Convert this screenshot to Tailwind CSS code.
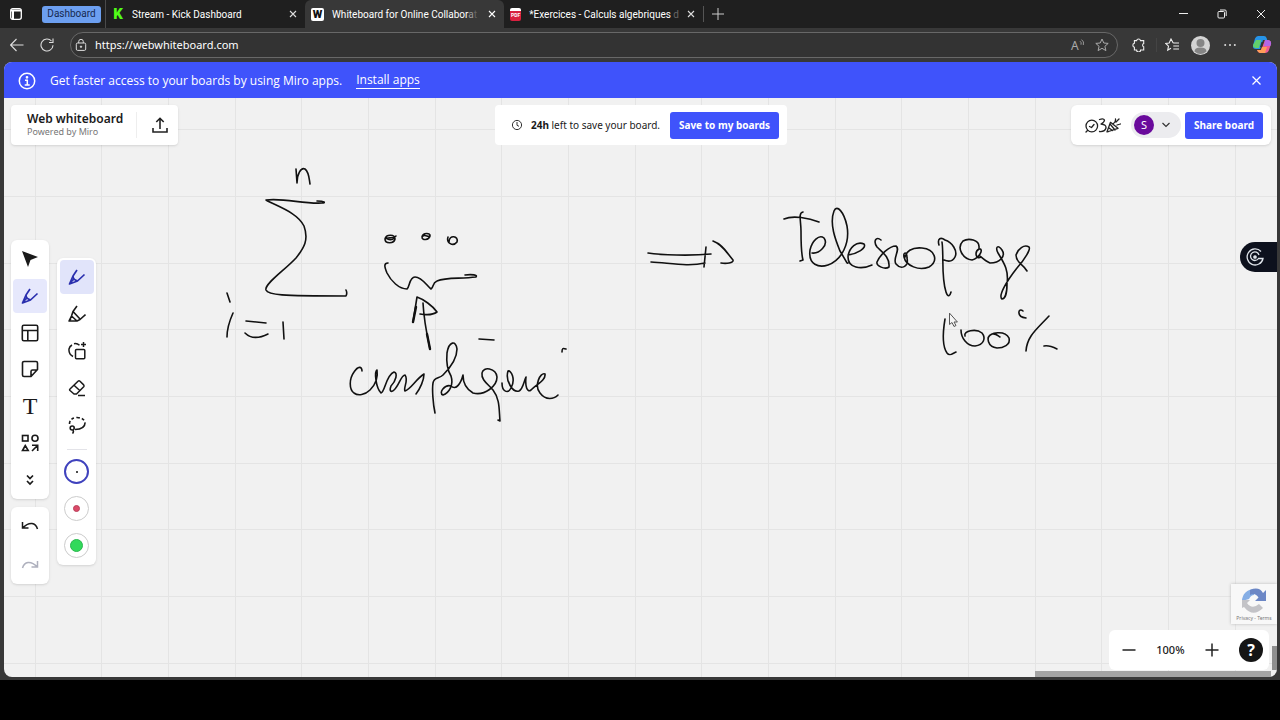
<!DOCTYPE html>
<html lang="en">
<head>
    <meta charset="UTF-8" />
    <meta name="viewport" content="width=device-width, initial-scale=1.0" />
    <title>Whiteboard for Online Collaboration</title>
    <script src="https://cdn.jsdelivr.net/npm/@tailwindcss/browser@4"></script>
</head>
<body class="bg-black min-h-screen flex flex-col font-['Noto_Sans',sans-serif] text-[#1a1a1a]">
<div class="flex-1 mb-10 flex flex-col bg-[#383838]">

    <!-- tab strip -->
    <div class="h-7 flex items-stretch bg-[#1f1f1f] text-white text-[10px] font-['Roboto',sans-serif]">
        <button class="w-8 flex items-center justify-center" aria-label="Tab actions">
            <svg class="size-3" viewBox="0 0 12 12" fill="none" stroke="#fff" stroke-width="1.3"><rect x="0.7" y="0.7" width="10.6" height="10.6" rx="2" /><path d="M1 2.6h10M3 3v8" stroke-width="2" /></svg>
        </button>
        <button class="self-center ml-2.5 mr-1 w-[59px] h-[17px] rounded-[3px] bg-[#6c9ff0] text-[#16294f] text-[10px] leading-4">Dashboard</button>
        <div class="w-[200px] pl-1.5 pr-2 flex items-center gap-2 border-l border-[#4a4a4a]">
            <span class="size-3 text-[#53fc18] font-black text-[15px] leading-3 text-center">K</span>
            <span class="flex-1 whitespace-nowrap">Stream - Kick Dashboard</span>
            <button aria-label="Close tab"><svg class="size-2" viewBox="0 0 8 8" stroke="#ddd" stroke-width="1.1"><path d="M1 1l6 6M7 1L1 7" /></svg></button>
        </div>
        <div class="w-[199px] pl-1.5 pr-2 flex items-center gap-2 bg-[#383838] rounded-t-md">
            <span class="size-[13px] rounded-[2px] bg-white text-[#111] font-black text-[11px] leading-[13px] text-center">W</span>
            <span class="flex-1 whitespace-nowrap">Whiteboard for Online Collabor<span class="text-[#999]">a</span><span class="text-[#666]">t</span></span>
            <button aria-label="Close tab"><svg class="size-2" viewBox="0 0 8 8" stroke="#fff" stroke-width="1.1"><path d="M1 1l6 6M7 1L1 7" /></svg></button>
        </div>
        <div class="w-[199px] pl-1.5 pr-2 flex items-center gap-2">
            <span class="w-3 h-[13px] rounded-[2px] bg-[#d8203f] border-t-3 border-white text-white font-bold text-[5px] leading-[9px] text-center">PDF</span>
            <span class="flex-1 whitespace-nowrap">*Exercices - Calculs algebriques <span class="text-[#666]">d</span></span>
            <button aria-label="Close tab"><svg class="size-2" viewBox="0 0 8 8" stroke="#ddd" stroke-width="1.1"><path d="M1 1l6 6M7 1L1 7" /></svg></button>
        </div>
        <button class="my-1.5 pl-2 border-l border-[#555]" aria-label="New tab"><svg class="size-3" viewBox="0 0 12 12" stroke="#ccc"><path d="M6 0v12M0 6h12" /></svg></button>
        <div class="ml-auto pr-3.5 flex items-center gap-[29px]">
            <button aria-label="Minimize"><svg class="size-2.5" viewBox="0 0 10 10" stroke="#eee"><path d="M1 4.5h9" /></svg></button>
            <button aria-label="Restore"><svg class="size-2.5" viewBox="0 0 10 10" fill="none" stroke="#eee"><rect x="1" y="2.5" width="6.5" height="6.5" rx="1" /><path d="M3 1h5a1.2 1.2 0 0 1 1.2 1.2V7" /></svg></button>
            <button aria-label="Close"><svg class="size-2.5" viewBox="0 0 10 10" stroke="#eee"><path d="M1 1l8 8M9 1L1 9" /></svg></button>
        </div>
    </div>

    <!-- address bar -->
    <div class="h-[34px] flex items-center pl-2.5 pr-2 text-white">
        <button aria-label="Back"><svg class="size-3.5" viewBox="0 0 14 14" fill="none" stroke="#ddd" stroke-width="1.1"><path d="M13.5 7H.8M6.5 1L.6 7l5.9 6" /></svg></button>
        <button class="mx-4" aria-label="Refresh"><svg class="size-3.5" viewBox="0 0 14 14" fill="none" stroke="#ddd" stroke-width="1.1"><path d="M13 7.2A6 6 0 1 1 11.5 3M13 .5v4H9" /></svg></button>
        <div class="flex-1 h-[26px] flex items-center gap-2 pl-1 pr-2 rounded-full border border-[#686868] bg-[#333]">
            <svg class="size-3" viewBox="0 0 12 12" fill="none" stroke="#ddd"><rect x="1.3" y="4" width="9.4" height="7.4" rx="1.3" /><path d="M3.7 4V2.6a2.3 2.3 0 0 1 4.6 0V4" /><circle cx="6" cy="7.7" r=".7" fill="#ddd" /></svg>
            <input class="flex-1 min-w-0 text-[11px] leading-4 outline-none" aria-label="Address" value="https://webwhiteboard.com" />
            <button class="mr-0.5" aria-label="Read aloud"><svg class="w-3.5 h-4 overflow-visible" viewBox="0 0 14 16" fill="none" stroke="#999"><text x="0" y="13" font-size="12" fill="#aaa" stroke="none">A</text><path d="M9 4.200q1.800 1.200 1 3.500M10.500 2.600q3 2 1.800 5.400" /></svg></button>
            <button aria-label="Favorite"><svg class="size-3.5" viewBox="0 0 14 14" fill="none" stroke="#aaa"><path d="M7 1l1.8 4 4.4.4-3.3 2.9 1 4.3L7 10.3l-3.9 2.3 1-4.3L.8 5.4 5.2 5z" /></svg></button>
        </div>
        <div class="ml-3.5 flex items-center gap-3">
            <button class="pr-2.5 border-r border-[#444]" aria-label="Extensions"><svg class="size-3.5" viewBox="0 0 14 14" fill="none" stroke="#eee" stroke-width="1.1"><path d="M4.600 2.600a2 2 0 0 1 3.900 0h3.200v3a1.700 1.700 0 0 0 0 3.200v3.200H8.600a2 2 0 0 1-4 0H2.400V9.200a2 2 0 0 1 0-3.900V2.600z" /></svg></button>
            <button class="-ml-1" aria-label="Favorites list"><svg class="size-3.5" viewBox="0 0 14 14" fill="none" stroke="#eee" stroke-width="1.1"><path d="M8.2 5L6 1 4.2 5 .7 5.5l2.8 2.6-.8 4L6 10.3M8.2 5H14M8.3 8H14M8.3 11H14" /></svg></button>
            <button aria-label="Profile"><svg class="size-[19px]" viewBox="0 0 19 19"><circle cx="9.5" cy="9.5" r="9.5" fill="#d4d4d4" /><circle cx="9.5" cy="7" r="4" fill="#858585" /><path d="M3.5 15.5q0-4 6-4t6 4q-6 5-12 0z" fill="#858585" /></svg></button>
            <button class="ml-0.5" aria-label="Settings"><svg class="size-3" viewBox="0 0 12 12" fill="#ddd"><circle cx="1.2" cy="6" r="1" /><circle cx="6" cy="6" r="1" /><circle cx="10.8" cy="6" r="1" /></svg></button>
            <button class="ml-1" aria-label="Copilot">
                <svg class="size-5" viewBox="0 0 20 20">
                    <path d="M6 1h6q2 0 2.600 2l.6 2H11L8 14H4q-3.500 0-3-3.500L3 3.500Q4 1 6 1z" fill="#2694e8" />
                    <path d="M4 5h5l-2 8H3q-2.500-1-2-3z" fill="#62cf6b" />
                    <path d="M13 5h3q3.500.5 3 4l-2 6q-1 3-4 3H8q-2 0-3-3h4z" fill="#ee5b95" />
                    <path d="M5 15h4l1-3h5l-2 6H8q-2 0-3-3z" fill="#ff9d58" />
                    <path d="M13 5h3q3.500.5 3 4l-.6 2H12z" fill="#b268e6" />
                    <path d="M9.500 7h2l-1.500 5H8z" fill="#333" />
                </svg>
            </button>
        </div>
    </div>

    <!-- page -->
    <div class="flex-1 ml-1 mr-[3px] mb-[3px] flex flex-col rounded-lg overflow-hidden bg-[#f1f1f1]">
        <div class="h-9 pt-px flex items-center pl-3.5 pr-4 bg-[#3f53fb] text-white text-[12px] font-['Open_Sans',sans-serif]">
            <svg class="size-[18px] mr-3.5" viewBox="0 0 18 18" fill="none" stroke="#fff" stroke-width="1.500"><circle cx="9" cy="9" r="7.700" /><path d="M7 8.300h2.300v4.500M6.700 12.900h5" /><circle cx="9" cy="5.300" r=".6" fill="#fff" /></svg>
            <span>Get faster access to your boards by using Miro apps.</span>
            <a href="#" class="ml-3.5 border-b border-white leading-4">Install apps</a>
            <button class="ml-auto" aria-label="Dismiss"><svg class="size-[9px]" viewBox="0 0 9 9" stroke="#fff" stroke-width="1.200"><path d="M.5.5l8 8M8.500.5l-8 8" /></svg></button>
        </div>

        <main class="flex-1 relative">
            <!-- board: grid and pen strokes -->
            <svg class="absolute inset-0 size-full">
                <defs>
                    <pattern id="grid" width="200" height="200" patternUnits="userSpaceOnUse">
                        <path d="M31.500 0v200M97.500 0v200M164.500 0v200M0 31.500h200M0 98.500h200M0 165.500h200" stroke="#e4e4e4" />
                    </pattern>
                </defs>
                <rect width="100%" height="100%" fill="url(#grid)" />
                <g transform="translate(-4 -98)" fill="none" stroke="#111" stroke-width="1.600" stroke-linecap="round" stroke-linejoin="round">
                    <!-- sum sign and its bounds -->
                    <path d="M296 169L297 183C297 174 301 167 305 169C309 172 309 178 310 184" />
                    <path d="M317 201C325 201 326 203 322 203C302 204 286 198 266 200C276 206 297 212 304 226C309 240 304 248 296 258C285 270 264 284 266 290C268 295 280 296 346 296C347 294 347 292 346 290" />
                    <path d="M227 293L230 302M233 313C229 322 227 329 227 337M246 321L266 323M245 333C251 339 260 338 268 334M283 322L284 339" />
                    <!-- three dots, brace and arrow -->
                    <path d="M385 239C386 234 395 234 395 239C394 244 385 244 385 239C388 237 393 239 396 236M386 237C388 241 393 240 394 238M422 237C423 232 431 233 430 236C429 240 422 241 422 237C425 233 428 238 429 236M448 237C446 243 453 247 457 242C459 236 449 234 449 242" />
                    <path d="M388 263C384 263 384 266 387 273C391 281 399 289 407 289C410 287 409 277 415 277C422 277 427 286 431 289C434 287 432 283 437 281C446 277 460 279 476 277C478 275 472 274 465 275" />
                    <path d="M430 349C427 335 424 322 423 303M413 322L417 297C423 299 433 306 437 312C433 315 426 315 420 314" />
                    <path d="M430 349L427 334M413 322L416 307" stroke-width="2.400" />
                    <!-- "complique" -->
                    <path d="M362 371C362 366 358 366 354 372C349 379 349 389 354 393C358 396 365 395 370 390C376 384 378 376 377 370C374 372 376 388 381 393C385 392 386 375 394 372C398 373 396 381 391 386C389 391 391 393 394 390C399 386 401 375 405 375C409 380 403 388 405 391C411 389 416 379 424 374C424 380 420 389 416 394" />
                    <path d="M435 413C433 404 432 389 433 383C434 377 439 379 443 375C451 367 457 358 457 349C456 340 449 341 447 353C446 364 448 371 451 376C454 385 449 393 443 395C438 393 445 384 451 386C456 391 461 383 463 375C463 384 466 389 473 393C485 396 497 386 497 377C496 368 483 366 482 373C481 380 488 384 493 390C500 399 499 410 500 421L498 420" />
                    <path d="M502 383C502 392 508 394 511 388C516 379 511 370 508 371C505 381 513 393 519 391C523 389 524 381 526 377C525 386 527 393 531 390C537 384 546 380 545 374C540 372 534 386 540 393C546 401 554 399 558 395M479 339L494 340M562 352C562 348 563 348 566 349" />
                    <!-- implication -->
                    <path d="M648 253C661 255 690 256 711 254M651 262C670 263 688 267 705 263M706 247L704 267M713 241C722 244 727 253 733 260C734 263 726 264 721 263" />
                    <!-- "Telescopage" -->
                    <path d="M784 219C793 215 809 218 819 222M803 212C798 213 801 221 801 231C801 243 801 253 803 260L800 261" />
                    <path d="M812 253C819 254 829 245 824 238C819 234 812 241 810 250C808 265 819 268 828 265C842 260 850 243 847 226C844 212 837 204 834 211C829 224 836 241 840 251C845 259 847 264 848 263M848 255C857 254 867 248 864 244C857 241 849 247 848 257C848 268 861 270 872 265" />
                    <path d="M881 240C876 236 873 241 877 247C882 252 890 257 889 267C885 270 876 266 877 262C880 255 889 246 896 246C901 249 892 259 896 264C901 270 909 267 907 258C907 251 903 252 904 257C906 266 919 271 929 267C939 261 935 249 922 248C911 247 906 252 905 257" />
                    <path d="M939 245C937 238 941 237 945 240C952 242 958 251 955 257C953 261 949 262 944 260M942 242C944 256 941 277 946 292C948 298 950 296 951 292" />
                    <path d="M979 248C980 239 968 238 963 241C956 248 963 259 972 260C980 258 984 248 979 249C974 252 976 260 981 257C978 254 985 261 990 263C1000 263 1006 256 1002 250C998 244 995 247 998 253C1004 263 1009 270 1007 284C1007 293 1005 299 1002 299C998 296 1006 282 1017 268C1025 259 1031 249 1029 247C1024 244 1018 249 1016 255C1016 263 1023 264 1027 271" />
                    <!-- "100°%" -->
                    <path d="M945 319C943 331 942 346 947 353C950 357 953 353 956 352M961 330C961 338 967 346 975 346C984 345 986 338 982 333C976 328 963 331 965 336M988 338C990 332 1005 330 1009 338C1011 345 1003 348 997 348C988 347 985 337 992 334C996 333 998 336 1000 337" />
                    <path d="M1023 311C1018 307 1016 317 1026 318M1049 316C1037 329 1027 336 1026 351M1044 346C1049 345 1053 347 1057 349" />
                    <path d="M949.500 313.500v11l2.500-2 2 4 2-1-2-3.500h3z" fill="#f5f5f5" stroke="#555" stroke-width="1" />
                </g>
            </svg>

            <!-- top cards -->
            <div class="relative grid grid-cols-[1fr_auto_1fr] items-start pt-[7px] pl-[7px] pr-1.5">
                <div class="justify-self-start h-10 w-[167px] pl-4 flex items-center bg-white rounded shadow-sm">
                    <div class="w-[110px] border-r border-[#eee]">
                        <h1 class="text-[12px] leading-[14px] font-semibold">Web whiteboard</h1>
                        <p class="text-[9px] leading-3 text-[#777]">Powered by Miro</p>
                    </div>
                    <button class="ml-[15px]" aria-label="Export"><svg class="size-4" viewBox="0 0 16 16" fill="none" stroke="#222" stroke-width="1.600"><path d="M8 12V1.500M4.300 5L8 1.300 11.700 5M1 11v4h14v-4" /></svg></button>
                </div>
                <div class="h-10 pl-4 pr-2 flex items-center bg-white rounded text-[10px]">
                    <svg class="size-3 mr-2" viewBox="0 0 12 12" fill="none" stroke="#333"><circle cx="6" cy="6" r="4.600" /><path d="M6 3v3.300l2 1" /></svg>
                    <p><b class="font-bold">24h</b> left to save your board.</p>
                    <button class="ml-2.5 h-[27px] w-[109px] rounded-[3px] bg-[#3f53fb] text-white font-bold text-[10px]">Save to my boards</button>
                </div>
                <div class="justify-self-end h-10 pl-3.5 pr-2 flex items-center bg-white rounded-md shadow-sm">
                    <button aria-label="Activities">
                        <svg class="w-9 h-4" viewBox="0 0 36 16" fill="none" stroke="#222" stroke-width="1.300" stroke-linecap="round" stroke-linejoin="round"><circle cx="6.800" cy="9" r="5.800" /><path d="M4.500 9.500l2 1L9 7.500M2.500 13.500l-1.500 1.500M14.500 2.500q4-1.500 5 .5 0 2-3.500 4 5.500.5 5 4-1 4-6.500 3.500M22 14.800l3.500-9.500 7.500 6-9.500 3.200zM25 7l5 6M28 7q3-2 2.500-5M31 5l3-3M32 8l3.500-1M24 11l3.500 2.500" /></svg>
                    </button>
                    <button class="ml-2.5 mr-1 w-[50px] h-[26px] pl-[3px] flex items-center gap-2 rounded-full bg-[#ececef]" aria-label="Account S">
                        <span class="size-5 rounded-full bg-[#6a0a9c] text-white text-[11px] leading-5">S</span>
                        <svg class="w-2 h-1.5" viewBox="0 0 8 6" fill="none" stroke="#333" stroke-width="1.200"><path d="M.5 1L4 4.500 7.500 1" /></svg>
                    </button>
                    <button class="h-[27px] w-[78px] rounded-[3px] bg-[#3f53fb] text-white font-bold text-[10px]">Share board</button>
                </div>
            </div>

            <!-- left toolbars -->
            <div class="absolute left-[7px] top-[142px] flex items-start gap-2">
                <div class="w-[38px] flex flex-col gap-2">
                    <div class="h-[259px] py-0.5 flex flex-col items-center gap-[3px] bg-white rounded-md shadow-sm">
                        <button class="w-[34px] h-[34px] flex items-center justify-center" aria-label="Select"><svg class="size-[18px]" viewBox="0 0 18 18" fill="#1a1a1a"><path d="M1 1l16 6-7.500 3L7 17z" /></svg></button>
                        <button class="w-[34px] h-[34px] flex items-center justify-center rounded bg-[#e6e8fc]" aria-label="Pen"><svg class="size-[18px]" viewBox="0 0 18 18" fill="none" stroke="#2a2fae" stroke-width="1.700" stroke-linejoin="round"><path d="M9 2L5 8 1.500 16l8-3 7-6.500M5 8q0 4 5 5M2 15l3.500-3.500" /></svg></button>
                        <button class="w-[34px] h-[34px] flex items-center justify-center" aria-label="Templates"><svg class="size-[18px]" viewBox="0 0 18 18" fill="none" stroke="#1a1a1a" stroke-width="1.600"><rect x="1.300" y="1.300" width="15.400" height="15.400" rx="1.500" /><path d="M1 6.500h16M6.800 6.500V17" /></svg></button>
                        <button class="w-[34px] h-[34px] flex items-center justify-center" aria-label="Sticky note"><svg class="size-[18px]" viewBox="0 0 18 18" fill="none" stroke="#1a1a1a" stroke-width="1.600" stroke-linejoin="round"><path d="M3 1.500h12A1.500 1.500 0 0 1 16.500 3v6.500L10 16.500H3A1.500 1.500 0 0 1 1.500 15V3A1.500 1.500 0 0 1 3 1.500zM10 16v-4.500Q10 10 11.500 10H16" /></svg></button>
                        <button class="w-[34px] h-[34px] font-['Liberation_Serif',serif] text-[24px] leading-[34px]" aria-label="Text">T</button>
                        <button class="w-[34px] h-[34px] flex items-center justify-center" aria-label="Shapes"><svg class="size-[18px]" viewBox="0 0 18 18" fill="none" stroke="#1a1a1a" stroke-width="1.600"><rect x="1.500" y="1.500" width="5.500" height="5.500" /><circle cx="14" cy="4.300" r="3" /><path d="M4.300 11.500L1.500 16.500h5.700zM11 17l5.500-5.500M11 11.300h5.700V17" /></svg></button>
                        <button class="w-[34px] h-[34px] flex items-center justify-center" aria-label="More tools"><svg class="w-2 h-3" viewBox="0 0 8 12" fill="none" stroke="#1a1a1a" stroke-width="1.700"><path d="M1 1.500l3 3 3-3M1 7l3 3 3-3" /></svg></button>
                    </div>
                    <div class="h-[77px] flex flex-col items-center justify-around bg-white rounded-md shadow-sm">
                        <button aria-label="Undo"><svg class="w-[18px] h-3" viewBox="0 0 18 12" fill="none" stroke="#1a1a1a" stroke-width="1.500"><path d="M1.500 2v6h6M1.500 8q5-5 9.500-4.500Q15 4 16.500 9" /></svg></button>
                        <button aria-label="Redo" disabled><svg class="w-[18px] h-3" viewBox="0 0 18 12" fill="none" stroke="#aeb0bd" stroke-width="1.500"><path d="M16.500 2v6h-6M16.500 8q-5-5-9.500-4.500Q3 4 1.500 9" /></svg></button>
                    </div>
                </div>
                <div class="mt-[18px] w-[39px] h-[307px] py-0.5 flex flex-col items-center gap-[3px] bg-white rounded-md shadow-sm">
                    <button class="w-[34px] h-[34px] flex items-center justify-center rounded bg-[#e1e4fa]" aria-label="Pen"><svg class="size-[18px]" viewBox="0 0 18 18" fill="none" stroke="#2a2fae" stroke-width="1.700" stroke-linejoin="round"><path d="M9 2L5 8 1.500 16l8-3 7-6.500M5 8q0 4 5 5M2 15l3.500-3.500" /></svg></button>
                    <button class="w-[34px] h-[34px] flex items-center justify-center" aria-label="Highlighter"><svg class="size-[18px]" viewBox="0 0 18 18" fill="none" stroke="#1a1a1a" stroke-width="1.600" stroke-linejoin="round"><path d="M9 1L5 6.500 3.500 11 1 16h8l3-1.500 5.500-5M5 6.500l7 7.500M3.500 11L9 16M1 16l2-2.500" /></svg></button>
                    <button class="w-[34px] h-[34px] flex items-center justify-center" aria-label="Smart drawing"><svg class="size-[18px]" viewBox="0 0 18 18" fill="none" stroke="#1a1a1a" stroke-width="1.500"><rect x="7.500" y="7.500" width="9.300" height="9.300" rx="1" /><path d="M5 14.500Q.5 12 1 7q.6-2.700 3-4M6 1.800q3-.8 5.500 1.500M15.500 0v5M13 2.500h5" /></svg></button>
                    <button class="w-[34px] h-[34px] flex items-center justify-center" aria-label="Eraser"><svg class="size-[18px]" viewBox="0 0 18 18" fill="none" stroke="#1a1a1a" stroke-width="1.500" stroke-linejoin="round"><path d="M2 10L10 2.200q1-.9 2 0l3.700 3.700q.8.9 0 1.800L8.500 15H6L2 11.500q-.8-.8 0-1.500zM6 6.300l6 5.500M10 16.500h7" /></svg></button>
                    <button class="w-[34px] h-[34px] flex items-center justify-center" aria-label="Lasso"><svg class="size-[18px]" viewBox="0 0 18 18" fill="none" stroke="#1a1a1a" stroke-width="1.600"><path d="M1.500 8Q1.500 2 9 1.500 16.500 2 17 7" stroke-dasharray="3 2.200" /><path d="M17 7q0 6-10 6.500" /><circle cx="4.200" cy="12" r="2" /><path d="M5 14q1 2-.5 3.500" /></svg></button>
                    <hr class="w-5 mt-1 mb-1.5 border-[#e3e3e8]" />
                    <button class="mb-[9px] size-[25px] shrink-0 flex items-center justify-center rounded-full border-2 border-[#3f42bd]" aria-label="Black, thin"><span class="size-[2px] bg-[#111] rounded-full"></span></button>
                    <button class="mb-[9px] size-[25px] shrink-0 flex items-center justify-center rounded-full border border-[#ccc]" aria-label="Red, medium"><span class="size-[7px] bg-[#dc4a68] border border-[#b8405a] rounded-full"></span></button>
                    <button class="size-[25px] shrink-0 flex items-center justify-center rounded-full border border-[#ccc]" aria-label="Green, thick"><span class="size-[13px] bg-[#32d95b] border border-[#2bb84e] rounded-full"></span></button>
                </div>
            </div>

            <!-- side tab -->
            <button class="absolute right-0 top-[144px] w-[37px] h-[30px] pl-1.5 flex items-center rounded-l-full bg-[#0d111d]" aria-label="Open side panel">
                <svg class="size-[18px]" viewBox="0 0 18 18" fill="none" stroke="#dfe4ea" stroke-width="1.300"><path d="M15 3.500A8 8 0 1 0 17 10.500h-4.500A4.300 4.300 0 1 1 13 7" /><circle cx="9" cy="9" r="1.200" fill="#dfe4ea" /></svg>
            </button>

            <div class="absolute right-0 bottom-[53px] w-[46px] h-10 pt-1 flex flex-col items-center bg-[#f8f8f8] shadow-[0_0_3px_#bbb]">
                <svg class="size-[26px] shrink-0" viewBox="0 0 26 26"><path d="M1 13A12 12 0 0 1 13 1v6q-3 0-5 4z" fill="#86aee5" /><path d="M9 2q9-4 13 3l3-3v11H14l3.500-3.500Q14 4 9 7z" fill="#6c87c5" /><path d="M1 12l8 0-3 3q5 7 12 1l4 4Q12 30 3 19l-2 1z" fill="#c3c3c7" /></svg>
                <p class="text-[5px] leading-[9px] text-[#777] whitespace-nowrap"><a href="#">Privacy</a> - <a href="#">Terms</a></p>
            </div>

            <!-- zoom controls -->
            <div class="absolute right-2 bottom-[7px] w-40 h-10 px-3 flex items-center justify-between bg-white rounded-md">
                <button aria-label="Zoom out"><svg class="size-4" viewBox="0 0 16 16" stroke="#222" stroke-width="1.500"><path d="M1.500 8h13" /></svg></button>
                <span class="text-[11px] font-medium">100%</span>
                <button aria-label="Zoom in"><svg class="size-4" viewBox="0 0 16 16" stroke="#222" stroke-width="1.500"><path d="M1.500 8h13M8 1.500v13" /></svg></button>
                <button class="-mr-1.5 size-6 rounded-full bg-[#151515] text-white font-bold text-[16px] leading-6" aria-label="Help">?</button>
            </div>

            <!-- scrollbars -->
            <div class="absolute bottom-0 right-1.5 w-[236px] h-1.5 bg-[#a3a3a3]"></div>
            <div class="absolute bottom-[7px] right-0 w-[5px] h-6 bg-[#8f8f8f]"></div>
        </main>
    </div>
</div>
</body>
</html>
